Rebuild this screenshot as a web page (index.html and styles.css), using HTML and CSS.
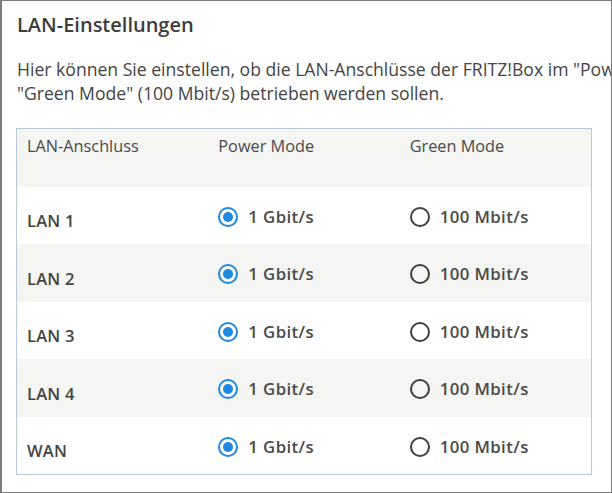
FILE: index.html
```html
<!DOCTYPE html>
<html lang="de">
<head>
<meta charset="utf-8">
<title>LAN-Einstellungen</title>
<link rel="stylesheet" href="styles.css">
</head>
<body>
<div class="frame">
  <h1 class="title">LAN-Einstellungen</h1>
  <p class="intro">Hier können Sie einstellen, ob die LAN-Anschlüsse der FRITZ!Box im "Power Mode" (1 Gbit/s) oder im<br>"Green Mode" (100 Mbit/s) betrieben werden sollen.</p>
  <div class="table">
    <div class="row head">
      <div class="cell">LAN-Anschluss</div>
      <div class="cell">Power Mode</div>
      <div class="cell">Green Mode</div>
    </div>
    <div class="row">
      <div class="cell label">LAN 1</div>
      <div class="cell opt"><span class="radio on"></span><span>1 Gbit/s</span></div>
      <div class="cell opt"><span class="radio"></span><span>100 Mbit/s</span></div>
    </div>
    <div class="row alt">
      <div class="cell label">LAN 2</div>
      <div class="cell opt"><span class="radio on"></span><span>1 Gbit/s</span></div>
      <div class="cell opt"><span class="radio"></span><span>100 Mbit/s</span></div>
    </div>
    <div class="row">
      <div class="cell label">LAN 3</div>
      <div class="cell opt"><span class="radio on"></span><span>1 Gbit/s</span></div>
      <div class="cell opt"><span class="radio"></span><span>100 Mbit/s</span></div>
    </div>
    <div class="row alt">
      <div class="cell label">LAN 4</div>
      <div class="cell opt"><span class="radio on"></span><span>1 Gbit/s</span></div>
      <div class="cell opt"><span class="radio"></span><span>100 Mbit/s</span></div>
    </div>
    <div class="row">
      <div class="cell label">WAN</div>
      <div class="cell opt"><span class="radio on"></span><span>1 Gbit/s</span></div>
      <div class="cell opt"><span class="radio"></span><span>100 Mbit/s</span></div>
    </div>
  </div>
</div>
</body>
</html>
```
FILE: styles.css
```css
html, body {
  margin: 0;
  padding: 0;
  background: #ffffff;
}

.frame {
  box-sizing: border-box;
  width: 612px;
  height: 493px;
  border: 1px solid #7b7b7b;
  border-left-width: 2px;
  padding: 11px 0 0 14px;
  overflow: hidden;
  font-family: "Open Sans", "Liberation Sans", sans-serif;
  color: #444444;
  background: #ffffff;
}

.title {
  margin: 0;
  font-size: 20px;
  line-height: 26px;
  font-weight: 600;
  color: #3d3d3d;
  padding-left: 1px;
}

.intro {
  margin: 19px 0 0 0;
  font-size: 17.6px;
  line-height: 24px;
  white-space: nowrap;
  color: #444444;
  padding-left: 1px;
}

.table {
  box-sizing: border-box;
  width: 576px;
  margin-top: 23px;
  border: 1px solid #b9cad6;
}

.row {
  display: grid;
  grid-template-columns: repeat(3, 1fr);
  height: 57.5px;
  background: #ffffff;
}

.row.head,
.row.alt {
  background: #f5f5f3;
}

.cell {
  padding: 0 10px;
  font-size: 16.3px;
  line-height: 20px;
}

.head .cell {
  padding-top: 6.5px;
  color: #4a4a4a;
}

.cell.label {
  padding-top: 24.5px;
  font-size: 16.5px;
  font-weight: 600;
  letter-spacing: 0.2px;
  color: #444444;
}

.cell.opt {
  display: flex;
  align-items: center;
  gap: 10px;
  padding-top: 20px;
  height: 20px;
  font-size: 16.8px;
  font-weight: 600;
  letter-spacing: 0.4px;
  color: #4a4a4a;
}

.radio {
  box-sizing: border-box;
  flex: none;
  width: 20px;
  height: 20px;
  border: 2px solid #3f3f3f;
  border-radius: 50%;
  display: flex;
  align-items: center;
  justify-content: center;
}

.radio.on {
  border-color: #1f88e2;
}

.radio.on::after {
  content: "";
  width: 10px;
  height: 10px;
  border-radius: 50%;
  background: #1f88e2;
}
```
